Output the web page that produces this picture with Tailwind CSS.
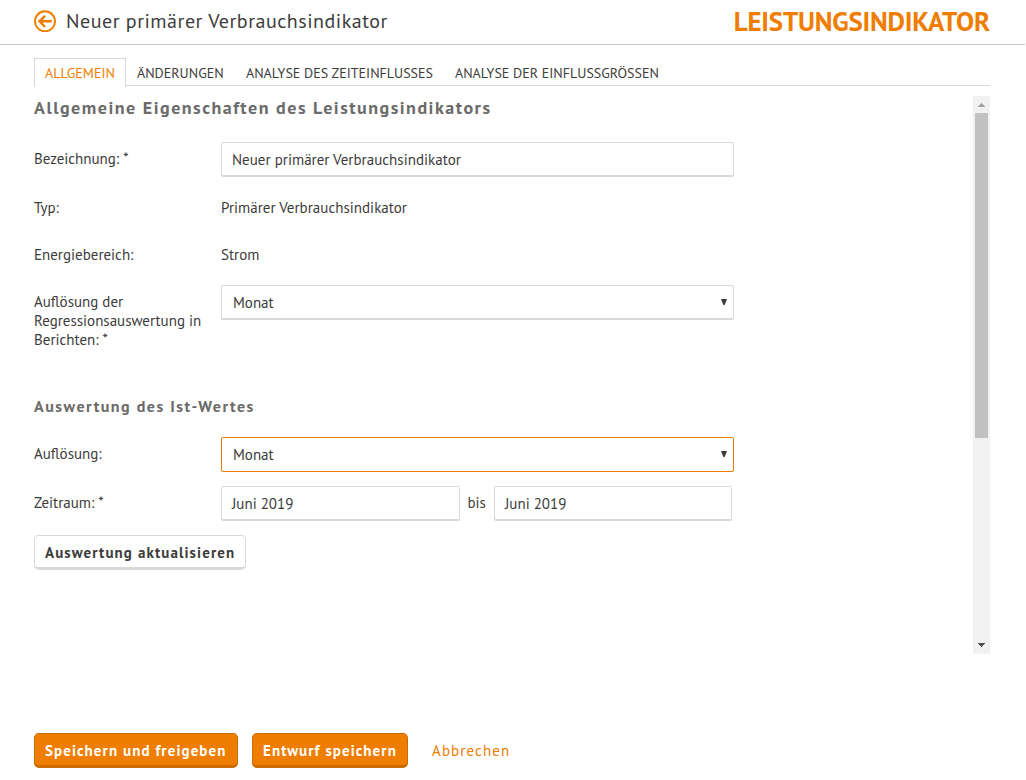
<!DOCTYPE html>
<html lang="de">

<head>
    <meta charset="UTF-8">
    <meta name="viewport" content="width=device-width, initial-scale=1.0">
    <title>Leistungsindikator</title>
    <script src="https://cdn.jsdelivr.net/npm/@tailwindcss/browser@4"></script>
</head>

<body class="h-[780px] overflow-hidden bg-white font-['PT_Sans','Open_Sans',sans-serif] text-[15px] leading-[19px] text-[#3c3c3b]">
    <header class="mr-px flex h-[45px] items-center justify-between border-b border-[#c6c6c6] pr-[35px] pb-0.5 pl-[34px]">
        <div class="flex items-center">
            <svg class="mr-2.5 h-[22px] w-[22px]" viewBox="0 0 22 22" fill="none" stroke="#ef7d00">
                <circle cx="11" cy="11.3" r="10" stroke-width="1.9" />
                <path d="M17.8 11.3H6M11 5.8L5.5 11.3l5.5 5.5" stroke-width="2.4" />
            </svg>
            <h1 class="text-[20px] leading-6 tracking-[0.52px] whitespace-nowrap">Neuer primärer Verbrauchsindikator</h1>
        </div>
        <div class="text-[27px] leading-8 font-bold tracking-[-0.22px] whitespace-nowrap text-[#ef7d00]">LEISTUNGSINDIKATOR</div>
    </header>

    <div class="mr-9 ml-[34px]">
        <nav class="mt-[13px] flex h-7 text-[14px] leading-[28px] whitespace-nowrap">
            <a class="h-[29px] w-[92px] border-x border-t border-[#d9d9d9] pl-2.5 text-[#ef7d00]">ALLGEMEIN</a>
            <div class="flex flex-1 border-b border-[#d9d9d9] pt-px">
                <a class="w-[109px] pl-[11px]">ÄNDERUNGEN</a>
                <a class="w-[209px] pl-[11px]">ANALYSE DES ZEITEINFLUSSES</a>
                <a class="pl-[11px]">ANALYSE DER EINFLUSSGRÖSSEN</a>
            </div>
        </nav>

        <div class="mt-2.5 flex h-[558px] justify-between">
            <main class="w-[700px] whitespace-nowrap">
                <h2 class="mb-[22px] text-[18px] leading-6 font-bold tracking-[1.5px] text-[#6b6b6a]">Allgemeine Eigenschaften des Leistungsindikators</h2>

                <div class="mb-3.5 flex h-[35px]">
                    <label class="w-[187px] pt-[7px]">Bezeichnung: *</label>
                    <div class="w-[513px] rounded-[2px] border border-b-2 border-[#d9d9d9] pt-[7px] pl-2.5 tracking-[0.02px]">Neuer primärer Verbrauchsindikator</div>
                </div>
                <div class="mb-3.5 flex h-[33px]">
                    <label class="w-[187px] pt-[7px]">Typ:</label>
                    <span class="pt-[7px] tracking-[0.02px]">Primärer Verbrauchsindikator</span>
                </div>
                <div class="mb-3.5 flex h-[33px]">
                    <label class="w-[187px] pt-[7px]">Energiebereich:</label>
                    <span class="pt-[7px]">Strom</span>
                </div>
                <div class="flex h-[109px] items-start">
                    <label class="w-[187px] pt-[7px]">Auflösung der<br>Regressionsauswertung in<br>Berichten: *</label>
                    <div class="flex h-[35px] w-[513px] justify-between rounded-[2px] border border-b-2 border-[#d9d9d9] pt-[7px] pr-1.5 pl-[11px]">
                        <span>Monat</span>
                        <svg class="mt-1.5 h-1.5 w-1.5" viewBox="0 0 6 6" fill="#3c3c3b"><path d="M0 0h6L3.6 6H2.4z" /></svg>
                    </div>
                </div>

                <h3 class="mb-[19px] text-[16px] leading-6 font-bold tracking-[1.5px] text-[#6b6b6a]">Auswertung des Ist-Wertes</h3>

                <div class="mb-3.5 flex h-[35px]">
                    <label class="w-[187px] pt-[7px]">Auflösung:</label>
                    <div class="flex w-[513px] justify-between rounded-[2px] border border-[#ef7d00] pt-[7px] pr-1.5 pl-[11px]">
                        <span>Monat</span>
                        <svg class="mt-1.5 h-1.5 w-1.5" viewBox="0 0 6 6" fill="#3c3c3b"><path d="M0 0h6L3.6 6H2.4z" /></svg>
                    </div>
                </div>
                <div class="mb-3.5 flex h-[35px]">
                    <label class="w-[187px] pt-[7px]">Zeitraum: *</label>
                    <div class="w-[239px] rounded-[2px] border border-b-2 border-[#d9d9d9] pt-[7px] pl-2.5">Juni 2019</div>
                    <span class="w-[34px] pt-[7px] pl-[7.5px]">bis</span>
                    <div class="w-[238px] rounded-[2px] border border-b-2 border-[#d9d9d9] pt-[7px] pl-2.5">Juni 2019</div>
                </div>
                <button class="block h-[35px] w-[212px] rounded-[5px] border border-b-3 border-[#d9d9d9] pt-0.5 pl-2.5 text-left font-bold tracking-[1.1px]">Auswertung aktualisieren</button>
            </main>

            <!-- scrollbar -->
            <div class="flex w-[17px] flex-col items-center bg-[#f1f1f1]">
                <svg class="h-[17px] w-[17px]" viewBox="0 0 17 17" fill="#a3a3a3" shape-rendering="crispEdges"><path d="M5 11V10h1V9h1V8h1V7h1v1h1v1h1v1h1v1z" /></svg>
                <div class="h-[325px] w-[13px] bg-[#c1c1c1]"></div>
                <svg class="mt-auto h-[17px] w-[17px]" viewBox="0 0 17 17" fill="#505050" shape-rendering="crispEdges"><path d="M5 6h7v1h-1v1h-1v1h-1v1H8V9H7V8H6V7H5z" /></svg>
            </div>
        </div>

        <footer class="mt-[79px] flex h-[35px] whitespace-nowrap">
            <button class="mr-3.5 w-[204px] rounded-[5px] border border-b-3 border-[#cc6b00] bg-[#ef7d00] pt-0.5 pl-2.5 text-left font-bold tracking-[1.08px] text-white">Speichern und freigeben</button>
            <button class="mr-6 w-[156px] rounded-[5px] border border-b-3 border-[#cc6b00] bg-[#ef7d00] pt-0.5 pl-2.5 text-left font-bold tracking-[1.08px] text-white">Entwurf speichern</button>
            <a class="pt-2 tracking-[1.1px] text-[#ef7d00]">Abbrechen</a>
        </footer>
    </div>
</body>

</html>
